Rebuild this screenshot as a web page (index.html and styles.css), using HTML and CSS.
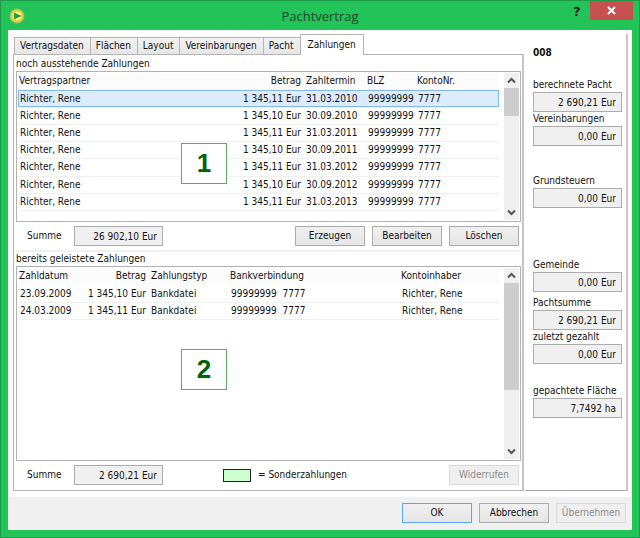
FILE: index.html
```html
<!DOCTYPE html>
<html lang="de">
<head>
  <meta charset="utf-8">
  <title>Pachtvertrag</title>
  <link rel="stylesheet" href="styles.css">
</head>
<body>
  <div class="window">
    <header class="titlebar">
      <svg class="app-icon" width="16" height="16" viewBox="0 0 16 16">
        <circle cx="8" cy="8" r="7" fill="#e6dc28" stroke="#a8b080" stroke-width="1"/>
        <circle cx="8" cy="8" r="5" fill="#f2f5a0" stroke="#d8c820" stroke-width="1"/>
        <path d="M5 4.5 L12.5 8 L5 11.5 Z" fill="#2c9a3c"/>
      </svg>
      <h1>Pachtvertrag</h1>
      <div class="window-controls">
        <button class="btn-help" type="button">?</button>
        <button class="btn-close" type="button" aria-label="Schließen">
          <svg width="9" height="9" viewBox="0 0 9 9"><path d="M1 1 L8 8 M8 1 L1 8" stroke="#fff" stroke-width="2"/></svg>
        </button>
      </div>
    </header>

    <div class="content">
      <main class="main">
        <div class="tabs" role="tablist">
          <button class="tab" role="tab" type="button">Vertragsdaten</button>
          <button class="tab" role="tab" type="button">Flächen</button>
          <button class="tab" role="tab" type="button">Layout</button>
          <button class="tab" role="tab" type="button">Vereinbarungen</button>
          <button class="tab" role="tab" type="button">Pacht</button>
          <button class="tab active" role="tab" type="button" aria-selected="true">Zahlungen</button>
        </div>

        <div class="panel" role="tabpanel">
          <h2>noch ausstehende Zahlungen</h2>
          <div class="list list-open">
            <div class="list-body">
              <table class="open-table">
                <colgroup>
                  <col><col class="col-amount"><col class="col-date"><col class="col-blz"><col class="col-konto">
                </colgroup>
                <thead>
                  <tr><th>Vertragspartner</th><th class="num">Betrag</th><th>Zahltermin</th><th>BLZ</th><th>KontoNr.</th></tr>
                </thead>
                <tbody>
                  <tr class="selected"><td>Richter, Rene</td><td class="num">1 345,11 Eur</td><td>31.03.2010</td><td>99999999</td><td>7777</td></tr>
                  <tr><td>Richter, Rene</td><td class="num">1 345,10 Eur</td><td>30.09.2010</td><td>99999999</td><td>7777</td></tr>
                  <tr><td>Richter, Rene</td><td class="num">1 345,11 Eur</td><td>31.03.2011</td><td>99999999</td><td>7777</td></tr>
                  <tr><td>Richter, Rene</td><td class="num">1 345,10 Eur</td><td>30.09.2011</td><td>99999999</td><td>7777</td></tr>
                  <tr><td>Richter, Rene</td><td class="num">1 345,11 Eur</td><td>31.03.2012</td><td>99999999</td><td>7777</td></tr>
                  <tr><td>Richter, Rene</td><td class="num">1 345,10 Eur</td><td>30.09.2012</td><td>99999999</td><td>7777</td></tr>
                  <tr><td>Richter, Rene</td><td class="num">1 345,11 Eur</td><td>31.03.2013</td><td>99999999</td><td>7777</td></tr>
                </tbody>
              </table>
            </div>
            <div class="scrollbar">
              <svg class="arrow" width="15" height="15" viewBox="0 0 15 15"><path d="M4 9.5 L7.5 6 L11 9.5" fill="none" stroke="#555" stroke-width="2"/></svg>
              <div class="thumb"></div>
              <svg class="arrow arrow-down" width="15" height="15" viewBox="0 0 15 15"><path d="M4 5.5 L7.5 9 L11 5.5" fill="none" stroke="#555" stroke-width="2"/></svg>
            </div>
            <span class="marker">1</span>
          </div>

          <div class="summary">
            <label for="sumOpen">Summe</label>
            <input class="value" id="sumOpen" type="text" value="26 902,10 Eur" readonly>
            <div class="actions">
              <button class="btn" type="button">Erzeugen</button>
              <button class="btn" type="button">Bearbeiten</button>
              <button class="btn" type="button">Löschen</button>
            </div>
          </div>

          <h2 class="second">bereits geleistete Zahlungen</h2>
          <div class="list list-paid">
            <div class="list-body">
              <table class="paid-table">
                <colgroup>
                  <col class="col-date-paid"><col class="col-amount-paid"><col class="col-type"><col><col class="col-owner">
                </colgroup>
                <thead>
                  <tr><th>Zahldatum</th><th class="num">Betrag</th><th>Zahlungstyp</th><th>Bankverbindung</th><th>Kontoinhaber</th></tr>
                </thead>
                <tbody>
                  <tr><td>23.09.2009</td><td class="num">1 345,10 Eur</td><td>Bankdatei</td><td>99999999&nbsp; 7777</td><td>Richter, Rene</td></tr>
                  <tr><td>24.03.2009</td><td class="num">1 345,11 Eur</td><td>Bankdatei</td><td>99999999&nbsp; 7777</td><td>Richter, Rene</td></tr>
                </tbody>
              </table>
            </div>
            <div class="scrollbar">
              <svg class="arrow" width="15" height="15" viewBox="0 0 15 15"><path d="M4 9.5 L7.5 6 L11 9.5" fill="none" stroke="#555" stroke-width="2"/></svg>
              <div class="thumb"></div>
              <svg class="arrow arrow-down" width="15" height="15" viewBox="0 0 15 15"><path d="M4 5.5 L7.5 9 L11 5.5" fill="none" stroke="#555" stroke-width="2"/></svg>
            </div>
            <span class="marker">2</span>
          </div>

          <div class="summary">
            <label for="sumPaid">Summe</label>
            <input class="value" id="sumPaid" type="text" value="2 690,21 Eur" readonly>
            <span class="swatch"></span>
            <span>= Sonderzahlungen</span>
            <div class="actions">
              <button class="btn" type="button" disabled>Widerrufen</button>
            </div>
          </div>
        </div>
      </main>

      <aside class="sidebar">
        <strong class="contract-no">008</strong>
        <div class="field">
          <label for="pacht">berechnete Pacht</label>
          <input class="value" id="pacht" type="text" value="2 690,21 Eur" readonly>
        </div>
        <div class="field">
          <label for="vereinbarungen">Vereinbarungen</label>
          <input class="value" id="vereinbarungen" type="text" value="0,00 Eur" readonly>
        </div>
        <div class="field field-tax">
          <label for="grundsteuern">Grundsteuern</label>
          <input class="value" id="grundsteuern" type="text" value="0,00 Eur" readonly>
        </div>
        <div class="field field-town">
          <label for="gemeinde">Gemeinde</label>
          <input class="value" id="gemeinde" type="text" value="0,00 Eur" readonly>
        </div>
        <div class="field field-total">
          <label for="pachtsumme">Pachtsumme</label>
          <input class="value" id="pachtsumme" type="text" value="2 690,21 Eur" readonly>
        </div>
        <div class="field">
          <label for="gezahlt">zuletzt gezahlt</label>
          <input class="value" id="gezahlt" type="text" value="0,00 Eur" readonly>
        </div>
        <div class="field field-area">
          <label for="flaeche">gepachtete Fläche</label>
          <input class="value" id="flaeche" type="text" value="7,7492 ha" readonly>
        </div>
      </aside>
    </div>

    <footer class="footer">
      <button class="btn btn-default" type="button">OK</button>
      <button class="btn" type="button">Abbrechen</button>
      <button class="btn" type="button" disabled>Übernehmen</button>
    </footer>
  </div>
</body>
</html>
```

FILE: styles.css
```css
* {
  box-sizing: border-box;
}

body {
  margin: 0;
  font-family: "DejaVu Sans Condensed", "Noto Sans", sans-serif;
  font-size: 10px;
  line-height: 14px;
  color: #111;
}

button,
input {
  font: inherit;
  color: inherit;
  margin: 0;
}

/* window frame */
.window {
  display: flex;
  flex-direction: column;
  min-height: 100vh;
  padding: 0 7px 7px;
  background-color: #22c358;
  border: 1px solid #1f9a49;
}

.titlebar {
  display: grid;
  grid-template-columns: 1fr auto 1fr;
  align-items: center;
  height: 29px;
}

.app-icon {
  margin-left: 1px;
}

.titlebar h1 {
  margin: 0;
  font-family: "Open Sans", "Noto Sans", sans-serif;
  font-size: 13px;
  font-weight: normal;
  color: #1c4a2b;
}

.window-controls {
  display: flex;
  align-self: start;
  justify-content: flex-end;
  gap: 10px;
  margin-right: -1px;
}

.btn-help {
  padding: 0;
  border: none;
  background: none;
  font-family: "Open Sans", "Noto Sans", sans-serif;
  font-size: 13px;
  font-weight: bold;
}

.btn-close {
  width: 43px;
  height: 19px;
  padding: 0;
  border: none;
  background-color: #c75050;
  line-height: 0;
}

.content {
  display: flex;
  flex: 1;
  padding: 4px 4px 6px 5px;
  background-color: #fff;
}

.main {
  display: flex;
  flex-direction: column;
  flex: 1;
}

/* tabs */
.tabs {
  display: flex;
  align-items: flex-end;
  padding-left: 1px;
}

.tab {
  height: 17px;
  padding: 0 6px 0 5px;
  border: 1px solid #b4b4b4;
  border-bottom: none;
  border-right: none;
  background: linear-gradient(#f2f2f2, #e6e6e6);
  white-space: nowrap;
}

.tab.active {
  height: 21px;
  margin-bottom: -1px;
  padding: 0 7px;
  border-right: 1px solid #b4b4b4;
  background: #fff;
  z-index: 1;
}

.panel {
  display: flex;
  flex-direction: column;
  flex: 1;
  padding: 2px 1px 5px 2px;
  border: 1px solid #b4b4b4;
  border-right: 2px solid #c4c4c4;
}

.panel h2 {
  margin: 0;
  font-size: inherit;
  font-weight: normal;
}

.panel h2.second {
  margin-top: 4px;
  border-top: 2px solid #f0f0f0;
}

/* lists */
.list {
  position: relative;
  display: flex;
  gap: 5px;
  padding: 1px;
  border: 1px solid #b0b2b8;
}

.list-open {
  height: 151px;
}

.list-paid {
  flex: 1;
}

.list-body {
  flex: 1;
}

table {
  width: 100%;
  table-layout: fixed;
  border-collapse: collapse;
}

tr {
  height: 17px;
}

th,
td {
  padding: 0 0 0 2px;
  border-bottom: 1px solid #f0f0f0;
  font-weight: normal;
  text-align: left;
  white-space: nowrap;
}

th {
  padding-left: 1px;
  border-bottom-color: #fcfcfc;
  background-color: #fcfcfc;
}

th.num,
td.num {
  padding: 0;
  text-align: right;
}

.selected {
  outline: 1px solid #84b8ea;
  outline-offset: -1px;
  background-color: #dcecfe;
}

.open-table {
  height: 138px;
}

.col-amount {
  width: 90px;
}

.col-date {
  width: 65px;
}

.col-blz {
  width: 50px;
}

.col-konto {
  width: 83px;
}

.open-table td:nth-child(3),
.open-table th:nth-child(3),
.paid-table td:nth-child(3),
.paid-table th:nth-child(3) {
  padding-left: 5px;
}

.col-date-paid {
  width: 60px;
}

.col-amount-paid {
  width: 68px;
}

.col-type {
  width: 83px;
}

.col-owner {
  width: 99px;
}

.scrollbar {
  display: flex;
  flex-direction: column;
  width: 15px;
  background-color: #f0f0f0;
}

.arrow {
  flex: none;
}

.arrow-down {
  margin-top: auto;
}

.thumb {
  height: 28px;
  background-color: #cdcdcd;
}

.list-paid .thumb {
  height: 107px;
}

/* numbered callouts over the lists */
.marker {
  position: absolute;
  left: 164px;
  top: 71px;
  width: 46px;
  height: 41px;
  border: 1px solid #5cab5c;
  background-color: #fff;
  font-family: "Liberation Sans", Arial, sans-serif;
  font-size: 26px;
  font-weight: bold;
  line-height: 39px;
  text-align: center;
  color: #006400;
}

.list-paid .marker {
  top: 82px;
}

/* sums and buttons below a list */
.summary {
  display: flex;
  align-items: center;
  height: 20px;
  margin-top: 4px;
  padding: 0 2px 0 11px;
}

.summary label {
  width: 47px;
}

.value {
  width: 89px;
  height: 20px;
  padding: 0 5px;
  border: 1px solid #acacac;
  background-color: #f0f0f0;
  text-align: right;
}

.swatch {
  width: 28px;
  height: 13px;
  margin: 0 7px 0 60px;
  border: 1px solid #222;
  background-color: #ccffcc;
}

.actions {
  display: flex;
  gap: 7px;
  margin-left: auto;
}

.btn {
  width: 70px;
  height: 20px;
  padding: 0;
  border: 1px solid #acacac;
  background: linear-gradient(#f0f0f0, #e5e5e5);
}

.btn:disabled {
  border-color: #d9d9d9;
  background: #efefef;
  color: #8a8a8a;
}

.btn-default {
  border-color: #5aa5f0;
}

/* right column */
.sidebar {
  width: 103px;
  margin-left: 1px;
  padding: 12px 4px 0 8px;
  border-right: 2px solid #c8c8c8;
  border-bottom: 1px solid #a8a8a8;
}

.contract-no {
  display: block;
  margin-bottom: 18px;
  font-weight: bold;
}

.field label {
  display: block;
  white-space: nowrap;
}

.field .value {
  display: block;
  width: 100%;
}

.field-tax {
  margin-top: 28px;
}

.field-town {
  margin-top: 50px;
}

.field-total {
  margin-top: 4px;
}

.field-area {
  margin-top: 20px;
}

.footer {
  display: flex;
  justify-content: flex-end;
  align-items: center;
  gap: 7px;
  height: 33px;
  padding: 0 6px 2px;
  background-color: #f0f0f0;
}
```
